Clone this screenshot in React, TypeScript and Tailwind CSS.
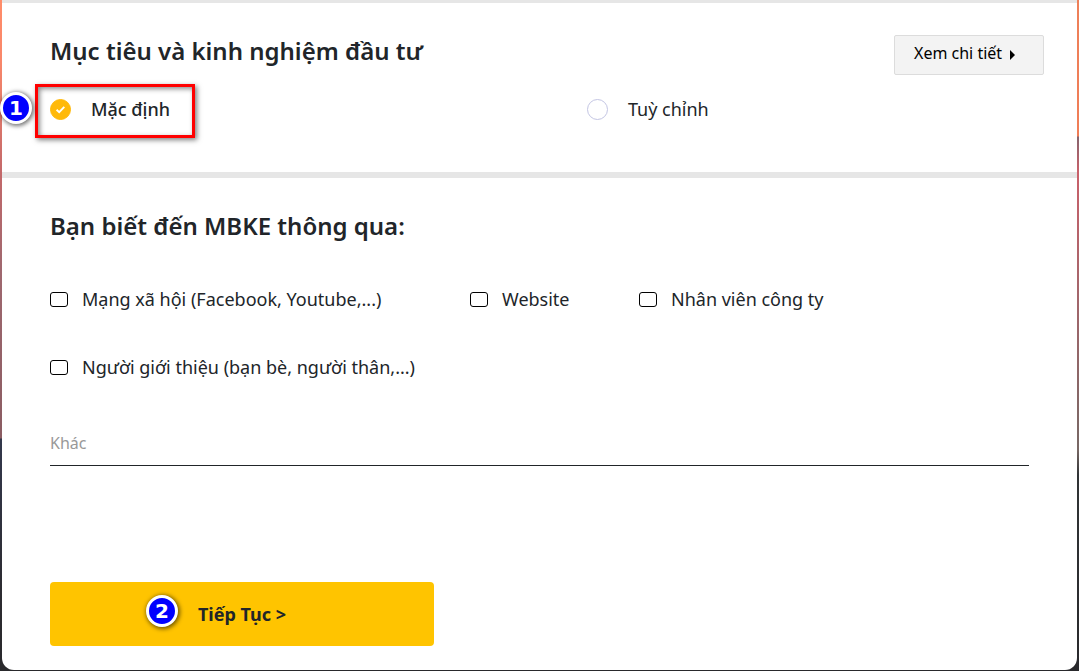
import React, { useState } from "react";

const sources = [
  { id: "social", label: "Mạng xã hội (Facebook, Youtube,...)" },
  { id: "website", label: "Website" },
  { id: "staff", label: "Nhân viên công ty" },
  { id: "referral", label: "Người giới thiệu (bạn bè, người thân,...)" },
];

function StepBadge({ value, className }: { value: number; className: string }) {
  return (
    <span
      className={`absolute flex size-8 items-center justify-center rounded-full border-3 border-white bg-[#0000ff] font-['DejaVu_Sans',sans-serif] text-xl leading-none font-bold text-white shadow-[1px_1px_4px_1px_rgba(0,0,0,0.55)] ${className}`}
    >
      {value}
    </span>
  );
}

function Radio({
  id,
  label,
  checked,
  onSelect,
  className,
}: {
  id: string;
  label: string;
  checked: boolean;
  onSelect: () => void;
  className: string;
}) {
  return (
    <label htmlFor={id} className="flex cursor-pointer items-center gap-5">
      <span className="grid place-items-center">
        <input
          id={id}
          type="radio"
          name="objective"
          checked={checked}
          onChange={onSelect}
          className="col-start-1 row-start-1 size-[21px] appearance-none rounded-full border border-[#c3c5e3] bg-white checked:border-[#ffb90a] checked:bg-[#ffb90a]"
        />
        {checked && (
          <svg viewBox="0 0 21 21" className="pointer-events-none col-start-1 row-start-1 size-[21px]" aria-hidden="true">
            <path d="M6.6 10.8 9.2 13.2 14.3 7.9" fill="none" stroke="#fff" strokeWidth="1.9" />
          </svg>
        )}
      </span>
      <span className={className}>{label}</span>
    </label>
  );
}

export default function App() {
  const [objective, setObjective] = useState("default");

  return (
    <div className="bg-[#29292c] bg-[linear-gradient(180deg,#ff8c69_0px,#f9876a_60px,#c4696a_171px,#9f686f_270px,#8a5c62_438px,#33384c_439px,#2c2b30_600px,#29292c_100%),linear-gradient(180deg,#ee8059_0px,#f07d57_136px,#86646d_137px,#c9606a_172px,#a2666b_300px,#776764_450px,#303335_475px,#29292c_100%)] bg-[size:50%_100%] bg-[position:left_top,right_top] bg-no-repeat px-0.5 pb-px font-['Noto_Sans',sans-serif] text-[#212529]">
      <form className="rounded-b-xl bg-white" onSubmit={(e) => e.preventDefault()}>
        <section className="border-t-3 border-b-6 border-[#e6e6e6] pt-8 pr-[33px] pb-[49px] pl-12">
          <div className="flex items-start justify-between">
            <h2 className="text-2xl leading-8 font-semibold">Mục tiêu và kinh nghiệm đầu tư</h2>
            <button
              type="button"
              className="flex h-10 w-[150px] items-center gap-2 rounded-xs border border-[#dcdcdc] bg-[#f3f3f3] pb-1 pl-[19px] text-base text-black"
            >
              Xem chi tiết
              <svg viewBox="0 0 5 10" className="mt-1 h-2.5 w-[5px]" aria-hidden="true">
                <path d="M0 0 5 5 0 10Z" fill="#000" />
              </svg>
            </button>
          </div>
          <div className="mt-5 grid grid-cols-[537px_auto] text-lg leading-7">
            <div className="relative">
              <Radio
                id="objective-default"
                label="Mặc định"
                checked={objective === "default"}
                onSelect={() => setObjective("default")}
                className="font-medium"
              />
              <span className="pointer-events-none absolute -top-[11px] -left-[15px] h-[54px] w-40 border-3 border-[#ff0000] shadow-[2px_2px_5px_rgba(0,0,0,0.5),inset_2px_2px_5px_rgba(0,0,0,0.45)]" />
              <StepBadge value={1} className="-top-[3px] -left-[50px]" />
            </div>
            <Radio
              id="objective-custom"
              label="Tuỳ chỉnh"
              checked={objective === "custom"}
              onSelect={() => setObjective("custom")}
              className=""
            />
          </div>
        </section>

        <section className="px-12 pt-8 pb-6">
          <h2 className="text-2xl leading-8 font-semibold">Bạn biết đến MBKE thông qua:</h2>
          <div className="mt-[43px] grid grid-cols-[420px_169px_auto] gap-y-10 text-lg leading-7">
            {sources.map(({ id, label }) => (
              <label key={id} htmlFor={id} className="flex cursor-pointer items-center gap-[14px] whitespace-nowrap">
                <input
                  id={id}
                  type="checkbox"
                  className="h-[15px] w-[18px] shrink-0 appearance-none rounded-[3px] border border-black bg-white checked:bg-[#ffc400]"
                />
                {label}
              </label>
            ))}
          </div>
          <input
            type="text"
            aria-label="Khác"
            placeholder="Khác"
            className="mt-10 block h-[45px] w-full border-b border-[#212529] bg-transparent text-base outline-none placeholder:text-[#999999]"
          />
          <button
            type="submit"
            className="relative mt-29 block h-16 w-96 rounded bg-[#ffc400] text-lg font-bold"
          >
            Tiếp Tục &gt;
            <StepBadge value={2} className="top-[13px] left-24" />
          </button>
        </section>
      </form>
    </div>
  );
}
